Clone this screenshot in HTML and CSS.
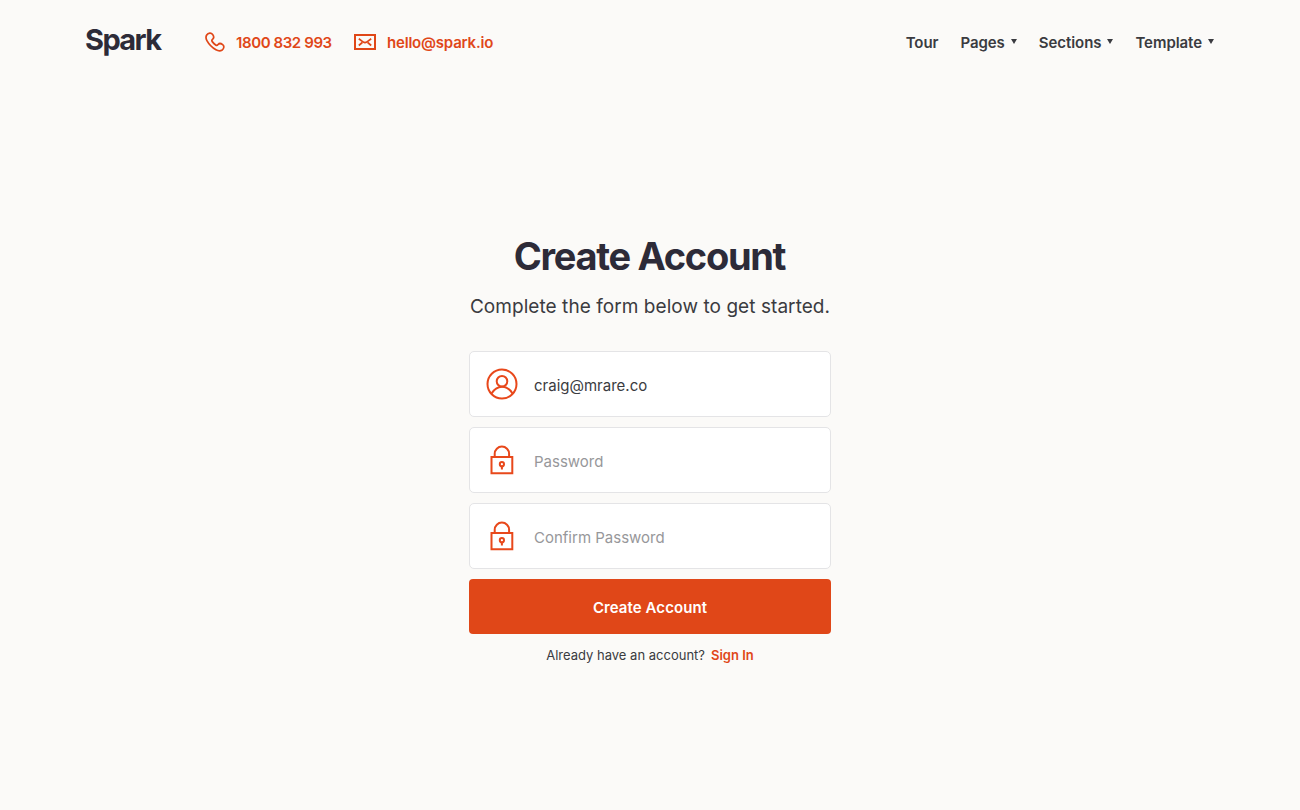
FILE: index.html
```html
<!DOCTYPE html>
<html lang="en">
<head>
<meta charset="utf-8">
<title>Create Account</title>
<link rel="stylesheet" href="styles.css">
</head>
<body>
<header class="header">
  <a class="logo">Spark</a>
  <a class="contact phone">
    <svg class="phone-icon" viewBox="0 0 22 22"><path d="M1.800 3.200C3.300.9 6.500.6 8 2.600c1.400 1.900 1.400 3.700.1 4.800-1.100 1-1.200 1.800-.5 2.700 1 1.300 2.200 2.500 3.600 3.500.8.6 1.700.5 2.500-.5 1.100-1.300 2.900-1.300 4.800.1 1.900 1.400 1.500 4.200-.500 5.600-2 1.300-4.300 1-6.500-.2C7.600 16.400 4.200 13 2 9 .9 6.900.6 5 1.800 3.200z"/></svg>
    <span>1800 832 993</span>
  </a>
  <a class="contact mail">
    <svg class="mail-icon" viewBox="0 0 22 16"><path d="M1 1h20v14H1z"/><path class="flap" d="M4.800 4.800l4.500 3.300q1.700 1 3.400 0l4.500-3.300M4.800 11.500l3.500-3M17.200 11.500l-3.500-3"/></svg>
    <span>hello@spark.io</span>
  </a>
  <nav class="nav">
    <a class="nav-link">Tour</a>
    <a class="nav-link">Pages<i class="caret"></i></a>
    <a class="nav-link">Sections<i class="caret"></i></a>
    <a class="nav-link">Template<i class="caret"></i></a>
  </nav>
</header>
<main class="main">
  <h1 class="title">Create Account</h1>
  <p class="subtitle">Complete the form below to get started.</p>
  <form class="form">
    <label class="field">
      <svg class="icon" viewBox="0 0 32 32"><circle cx="16" cy="16" r="14.500"/><circle cx="16" cy="13.300" r="5.300"/><path d="M5.300 25.800C8 21.300 11.500 18.700 16 18.700S24 21.300 26.700 25.800"/></svg>
      <span class="value">craig@mrare.co</span>
    </label>
    <label class="field">
      <svg class="icon" viewBox="0 0 32 32"><path d="M5.500 13h20.800v16.300H5.500zM8.700 13V9.800a7.200 7.200 0 0 1 14.400 0V13M15.900 22.300v3.200"/><circle cx="15.900" cy="20.200" r="2.100"/></svg>
      <span class="value hint">Password</span>
    </label>
    <label class="field">
      <svg class="icon" viewBox="0 0 32 32"><path d="M5.500 13h20.800v16.300H5.500zM8.700 13V9.800a7.200 7.200 0 0 1 14.400 0V13M15.900 22.300v3.200"/><circle cx="15.900" cy="20.200" r="2.100"/></svg>
      <span class="value hint">Confirm Password</span>
    </label>
    <button class="submit" type="button">Create Account</button>
  </form>
  <p class="footnote">Already have an account?<a class="signin">Sign In</a></p>
</main>
</body>
</html>
```
FILE: styles.css
```css
* { box-sizing: border-box; }
body { margin: 0; background: #fbfaf8; color: #3a3b40; font: 500 15px/20px "Inter", sans-serif; }
.header { display: flex; align-items: center; height: 84px; padding: 0 86px 0 85px; white-space: nowrap; }
.logo { width: 120px; color: #2d2b38; font-size: 29px; font-weight: 700; line-height: 36px; padding-bottom: 5px; letter-spacing: -1.600px; }
.contact { display: flex; align-items: center; color: #e04718; font-weight: 600; }
.contact span { padding-top: 2px; }
.phone { width: 149px; letter-spacing: -0.400px; }
.mail { letter-spacing: -0.200px; }
.phone-icon { width: 21px; height: 21px; margin-right: 10px; fill: none; stroke: #e04718; stroke-width: 1.800; }
.mail-icon { width: 22px; height: 16px; margin-right: 11px; fill: none; stroke: #e04718; stroke-width: 2; }
.flap { stroke-width: 1.700; }
.nav { display: flex; margin-left: auto; gap: 22px; padding-top: 2px; font-weight: 600; letter-spacing: -0.060px; }
.nav-link { display: flex; align-items: center; }
.caret { width: 0; height: 0; margin: -3px 0 0 6px; border: 3px solid transparent; border-top: 5px solid #3a3b40; border-bottom: 0; }
.main { width: 362px; margin: 148px auto 0; text-align: center; }
.title { margin: 0; font-size: 38px; line-height: 48px; font-weight: 700; letter-spacing: -1.300px; text-indent: -1px; color: #2d2b38; white-space: nowrap; }
.subtitle { margin: 13px 0 30px; font-size: 19px; line-height: 28px; font-weight: 400; letter-spacing: 0.060px; white-space: nowrap; }
.form { display: grid; gap: 10px; }
.field { display: flex; align-items: center; height: 66px; padding: 0 16px; border: 1px solid #e4e4e6; border-radius: 5px; background: #fff; font-weight: 400; }
.icon { width: 32px; height: 32px; margin-right: 16px; fill: none; stroke: #e8481b; stroke-width: 2; }
.value { padding-top: 4px; }
.hint { color: #97979a; }
.submit { height: 55px; padding: 3px 0 0; border: 0; border-radius: 4px; background: #e04718; color: #fff; font: 600 15px/20px "Inter", sans-serif; letter-spacing: 0.070px; }
.footnote { margin: 11px 0 0; font-size: 13px; line-height: 20px; font-weight: 400; }
.signin { margin-left: 6px; color: #e04718; font-weight: 600; }
```
